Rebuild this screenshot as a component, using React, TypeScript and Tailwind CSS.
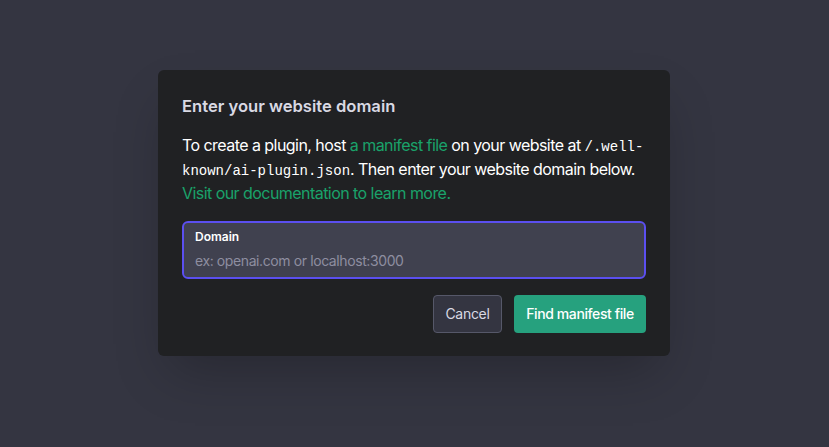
export default function App() {
  return (
    <div className="min-h-[447px] w-full bg-[#343541] flex justify-center pt-[70px] pr-px" style={{ fontFamily: "Inter, 'Noto Sans', sans-serif" }}>
      <div className="w-[512px] h-[286px] rounded-md bg-[#202123] p-6 shadow-2xl">
        <h2 className="text-[16.6px] leading-6 font-semibold text-[#d9d9e3]">Enter your website domain</h2>
        <p className="mt-[15px] text-base leading-6 tracking-[-0.55px] whitespace-nowrap text-white">
          To create a plugin, host <span className="text-[#19c37d] opacity-80">a manifest file</span> on your website at{" "}
          <code className="text-sm tracking-normal font-['Liberation_Mono',monospace]">/.well-</code>
          <br />
          <code className="text-sm tracking-normal font-['Liberation_Mono',monospace]">known/ai-plugin.json</code>. Then enter your website domain below.
          <br />
          <span className="text-[#19c37d] opacity-80">Visit our documentation to learn more.</span>
        </p>
        <div className="mt-4 h-[58px] rounded-md border-2 border-[#5b4ff0] bg-[#40414f] px-[11px] pt-[6px]">
          <div className="text-xs leading-4 font-semibold text-white">Domain</div>
          <div className="mt-[6px] text-sm leading-5 tracking-[-0.4px] text-[#8e8ea0]">ex: openai.com or localhost:3000</div>
        </div>
        <div className="mt-4 flex justify-end gap-3">
          <button className="h-[38px] w-[69px] rounded border border-[#565869] bg-[#343541] text-sm tracking-[-0.3px] text-[#d9d9e3]">Cancel</button>
          <button className="h-[38px] w-[132px] rounded bg-[#26a17e] text-sm font-medium tracking-[-0.4px] text-white">Find manifest file</button>
        </div>
      </div>
    </div>
  );
}
